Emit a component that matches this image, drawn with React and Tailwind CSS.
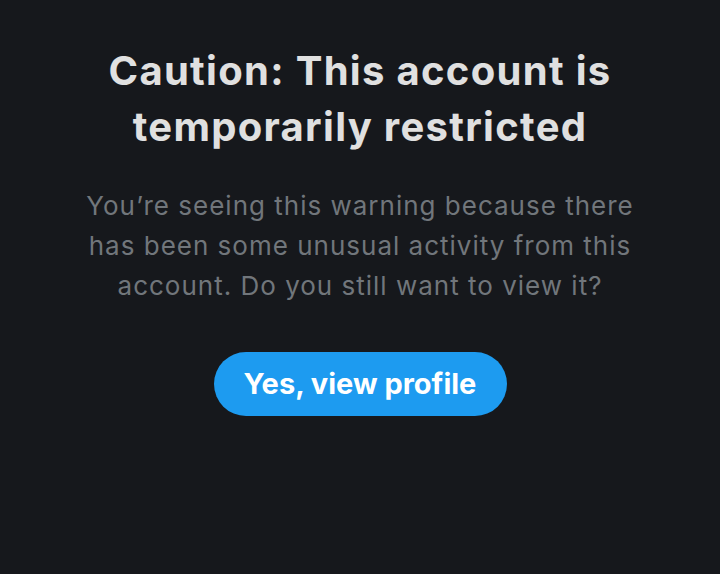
export default function App() {
  return (
    <div
      className="w-[720px] h-[574px] bg-[#16181c] flex flex-col items-center pt-[43px]"
      style={{ fontFamily: "Inter, 'Liberation Sans', sans-serif" }}
    >
      <h1 className="text-[40px] leading-[56px] font-bold tracking-[1.3px] text-[#e0e0e0] text-center">
        Caution: This account is
        <br />
        temporarily restricted
      </h1>
      <p className="mt-[31px] text-[26px] leading-[40px] tracking-[1px] text-[#71767b] text-center">
        You’re seeing this warning because there
        <br />
        has been some unusual activity from this
        <br />
        account. Do you still want to view it?
      </p>
      <button className="mt-[46px] h-[64px] w-[293px] rounded-full bg-[#1d9bf0] text-white text-[29px] font-bold">
        Yes, view profile
      </button>
    </div>
  );
}
